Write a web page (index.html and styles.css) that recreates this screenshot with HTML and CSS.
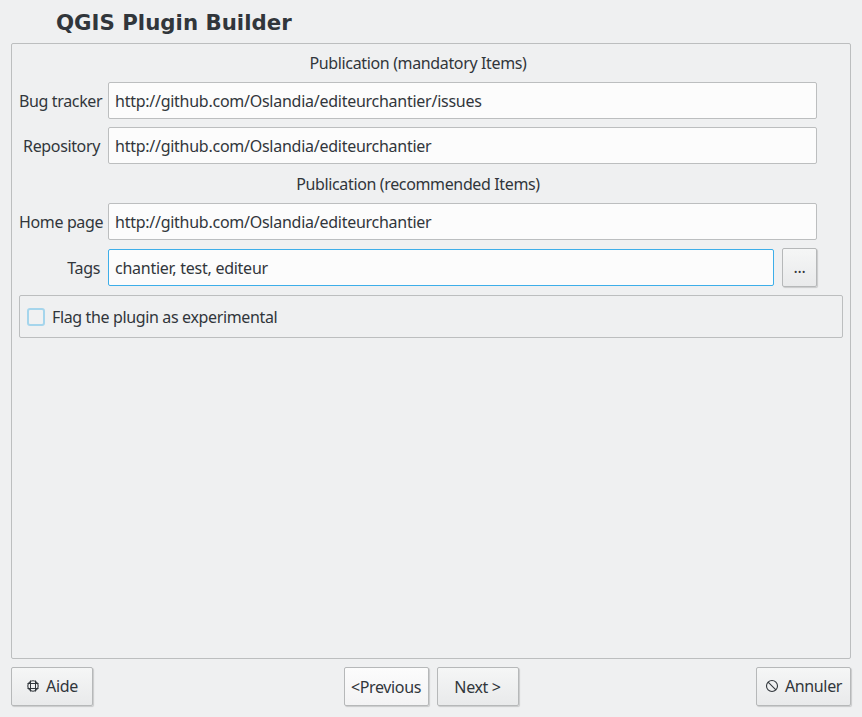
FILE: index.html
```html
<!DOCTYPE html>
<html lang="en">
<head>
<meta charset="utf-8">
<title>QGIS Plugin Builder</title>
<link rel="stylesheet" href="styles.css">
</head>
<body>
<div class="wizard">
  <h1 class="title">QGIS Plugin Builder</h1>
  <main class="frame">
    <div class="section-title first">Publication (mandatory Items)</div>
    <div class="row"><label class="label">Bug tracker</label><div class="input">http://github.com/Oslandia/editeurchantier/issues</div></div>
    <div class="row"><label class="label">Repository</label><div class="input">http://github.com/Oslandia/editeurchantier</div></div>
    <div class="section-title second">Publication (recommended Items)</div>
    <div class="row"><label class="label">Home page</label><div class="input">http://github.com/Oslandia/editeurchantier</div></div>
    <div class="row tags"><label class="label">Tags</label><div class="input focus">chantier, test, editeur</div><button class="btn more">...</button></div>
    <div class="group"><span class="check"></span><span>Flag the plugin as experimental</span></div>
  </main>
  <footer class="footer">
    <button class="btn aide"><svg class="icon" width="14" height="14" viewBox="0 0 14 14" fill="none" stroke="#31363b"><circle cx="7" cy="7" r="5.200" stroke-width="1.100"/><path d="M4.500 1.500v11M9.500 1.500v11M1.500 4.500h11M1.500 9.500h11" stroke-width="1"/></svg>Aide</button>
    <div class="nav">
      <button class="btn prev">&lt;Previous</button>
      <button class="btn next">Next &gt;</button>
    </div>
    <button class="btn cancel"><svg class="icon" width="14" height="14" viewBox="0 0 14 14" fill="none" stroke="#31363b" stroke-width="1.100"><circle cx="7" cy="7" r="5.500"/><path d="M3.100 3.100l7.800 7.800"/></svg>Annuler</button>
  </footer>
</div>
</body>
</html>
```
FILE: styles.css
```css
* { box-sizing: border-box; }
html, body { margin: 0; height: 100%; }
body {
  background: #eff0f1;
  color: #31363b;
  font-family: "Noto Sans", sans-serif;
  font-size: 16px;
  letter-spacing: -0.36px;
  overflow: hidden;
}
.wizard {
  width: 862px;
  height: 717px;
  padding: 0 11px;
  display: flex;
  flex-direction: column;
}
.title {
  margin: 0;
  height: 43px;
  padding: 9px 0 0 45px;
  font-family: "DejaVu Sans", sans-serif;
  font-size: 21.3px;
  letter-spacing: 0;
  line-height: 27px;
  font-weight: 700;
}
.frame {
  width: 840px;
  height: 616px;
  border: 1px solid #bcbebf;
  border-radius: 2px;
  padding: 0 7px;
}
.section-title { text-align: center; line-height: 20px; width: 798px; }
.section-title.first { padding-top: 9px; height: 38px; }
.section-title.second { padding-top: 2px; height: 31px; }
.row {
  display: flex;
  align-items: center;
  gap: 8px;
  height: 37px;
  margin-bottom: 8px;
  width: 798px;
}
.row.tags { margin-bottom: 9px; margin-top: 9px; height: 37px; }
.label { width: 81px; flex: none; text-align: right; white-space: nowrap; }
.input {
  flex: 1;
  height: 37px;
  line-height: 36px;
  padding: 0 6px;
  letter-spacing: -0.26px;
  background: #fcfcfc;
  border: 1px solid #bcbebf;
  border-radius: 2px;
  white-space: nowrap;
}
.input.focus { border-color: #3daee9; }
.btn {
  font: inherit;
  letter-spacing: inherit;
  color: inherit;
  height: 39px;
  border: 1px solid #b6b8b9;
  border-radius: 2px;
  background: linear-gradient(#f5f6f6, #e9eaeb);
  box-shadow: 1px 1px 1px rgba(0,0,0,.16);
  padding: 0 0 2px;
  display: inline-flex;
  align-items: center;
  justify-content: center;
}
.more { width: 35px; flex: none; }
.group {
  width: 824px;
  height: 43px;
  border: 1px solid #bcbebf;
  border-radius: 2px;
  padding: 0 7px;
  display: flex;
  align-items: center;
  gap: 7px;
}
.check {
  width: 18px;
  height: 18px;
  border: 2px solid #a5d5ec;
  border-radius: 3px;
  background: #f0f1f2;
}
.footer {
  height: 58px;
  padding-top: 8px;
  width: 840px;
  display: flex;
  justify-content: space-between;
  align-items: flex-start;
}
.nav { display: flex; gap: 8px; margin-left: 13px; }
.nav .btn { padding-bottom: 0; }
.icon { margin-right: 6px; }
.aide { width: 82px; }
.prev { width: 85px; background: linear-gradient(#fcfcfc, #f3f3f4); }
.next { width: 82px; }
.cancel { width: 95px; }
```
